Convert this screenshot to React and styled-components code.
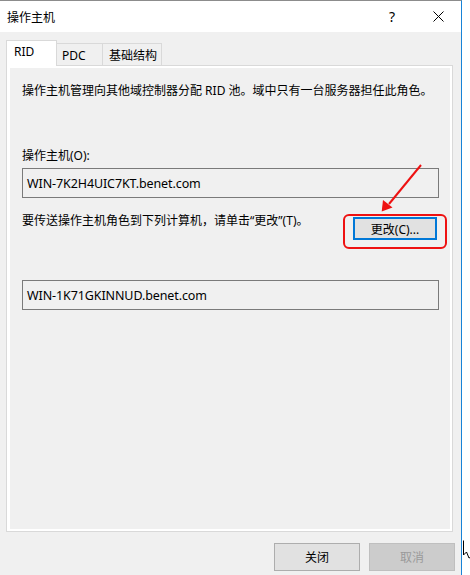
import React from "react";
import styled, { createGlobalStyle } from "styled-components";

const GlobalStyle = createGlobalStyle`
  html, body { margin: 0; padding: 0; background: #ffffff; }
  body {
    font-family: "Noto Sans", "Noto Sans CJK SC", sans-serif;
    font-size: 12px;
    color: #000;
  }
  * { box-sizing: border-box; }
`;

const Screen = styled.div`
  display: flex;
  width: 470px;
  height: 575px;
  overflow: hidden;
`;

const Window = styled.div`
  width: 462px;
  height: 575px;
  display: flex;
  flex-direction: column;
  background: #f0f0f0;
  border-top: 1px solid #8c8c8c;
  border-right: 1px solid #1883d7;
`;

const Strip = styled.div`
  flex: 1;
  position: relative;
  background: #ffffff;
`;

const Cursor = styled.svg`
  position: absolute;
  left: 1px;
  top: 540px;
`;

const TitleBar = styled.div`
  height: 31px;
  display: flex;
  align-items: center;
  background: #ffffff;
`;

const Title = styled.div`
  flex: 1;
  padding-left: 7px;
  font-family: "Noto Sans CJK SC", sans-serif;
  font-size: 12px;
  line-height: 16px;
  color: #000;
`;

const CaptionButton = styled.div`
  width: ${(p) => p.$w}px;
  height: 31px;
  display: flex;
  align-items: center;
  justify-content: center;
  font-family: "Noto Sans", sans-serif;
  font-size: 14px;
  color: #000;
`;

const Body = styled.div`
  flex: 1;
  display: flex;
  flex-direction: column;
  padding: 9px 6px 4px 6px;
`;

const TabStrip = styled.div`
  display: flex;
  align-items: flex-end;
  height: 25px;
  position: relative;
  z-index: 1;
  margin-bottom: -1px;
`;

const Tab = styled.div`
  height: ${(p) => (p.$active ? 26 : 23)}px;
  width: ${(p) => p.$w}px;
  padding-left: ${(p) => p.$pl}px;
  padding-top: ${(p) => (p.$active ? 3 : 4)}px;
  background: ${(p) => (p.$active ? "#ffffff" : "#f0f0f0")};
  border: 1px solid #d9d9d9;
  border-bottom: ${(p) => (p.$active ? "none" : "1px solid #d9d9d9")};
  margin-left: ${(p) => (p.$first ? 0 : -1)}px;
  font-size: 12px;
  line-height: 16px;
  white-space: nowrap;
`;

const Panel = styled.div`
  height: 467px;
  margin-right: 2px;
  border: 1px solid #d9d9d9;
  box-shadow: inset 3px 0 0 #fff, inset -2px 0 0 #fff, inset 0 2px 0 #fff, inset 0 -2px 0 #fff;
  padding: 17px 13px 0 15px;
  display: flex;
  flex-direction: column;
`;

const Text = styled.div`
  font-size: 12px;
  line-height: 16px;
  margin-top: ${(p) => p.$mt || 0}px;
  white-space: nowrap;
`;

const Field = styled.div`
  height: 30px;
  margin-top: ${(p) => p.$mt || 0}px;
  border: 1px solid #7a7a7a;
  background: #f0f0f0;
  padding-left: 4px;
  display: flex;
  align-items: center;
  font-size: 12.5px;
  letter-spacing: -0.1px;
`;

const ActionRow = styled.div`
  margin-top: 19px;
  display: flex;
  justify-content: space-between;
  align-items: flex-start;
  padding-right: 2px;
`;

const Highlight = styled.div`
  position: relative;
  &::before {
    content: "";
    position: absolute;
    left: -10px;
    right: -10px;
    top: -3px;
    bottom: -9px;
    border: 2px solid #ee1111;
    border-radius: 6px;
    pointer-events: none;
  }
`;

const Arrow = styled.svg`
  position: absolute;
  left: 20px;
  top: -56px;
  pointer-events: none;
`;

const Button = styled.button`
  width: ${(p) => p.$w}px;
  height: ${(p) => p.$h}px;
  margin: 0;
  padding: 0;
  font-family: "Noto Sans", "Noto Sans CJK SC", sans-serif;
  font-size: 12px;
  background: ${(p) => (p.$disabled ? "#cccccc" : "#e1e1e1")};
  color: ${(p) => (p.$disabled ? "#9a9a9a" : "#000")};
  border: ${(p) =>
    p.$focus ? "2px solid #0078d7" : p.$disabled ? "1px solid #bfbfbf" : "1px solid #adadad"};
  display: flex;
  align-items: center;
  justify-content: center;
`;

const Footer = styled.div`
  margin-top: 11px;
  display: flex;
  justify-content: flex-end;
  gap: 9px;
`;

export default function App() {
  return (
    <>
      <GlobalStyle />
      <Screen>
        <Window>
          <TitleBar>
            <Title>操作主机</Title>
            <CaptionButton $w={46}>?</CaptionButton>
            <CaptionButton $w={46}>
              <svg width="11" height="11" viewBox="0 0 11 11">
                <path d="M0.5 0.5 L10.5 10.5 M10.5 0.5 L0.5 10.5" stroke="#000" strokeWidth="1" fill="none" />
              </svg>
            </CaptionButton>
          </TitleBar>
          <Body>
            <TabStrip>
              <Tab $active $first $w={51} $pl={7}>RID</Tab>
              <Tab $w={47} $pl={5}>PDC</Tab>
              <Tab $w={60} $pl={6}>基础结构</Tab>
            </TabStrip>
            <Panel>
              <Text>操作主机管理向其他域控制器分配 RID 池。域中只有一台服务器担任此角色。</Text>
              <Text $mt={49}>操作主机(O):</Text>
              <Field $mt={4}>WIN-7K2H4UIC7KT.benet.com</Field>
              <ActionRow>
                <Text $mt={-4}>要传送操作主机角色到下列计算机，请单击“更改”(T)。</Text>
                <Highlight>
                  <Arrow width="52" height="54" viewBox="0 0 52 54">
                    <path d="M48 4 L16 43" stroke="#ee1111" strokeWidth="2" fill="none" />
                    <path d="M8.7 50.5 L10 39 L19.5 46.5 Z" fill="#ee1111" />
                  </Arrow>
                  <Button $w={84} $h={23} $focus>更改(C)...</Button>
                </Highlight>
              </ActionRow>
              <Field $mt={40}>WIN-1K71GKINNUD.benet.com</Field>
            </Panel>
            <Footer>
              <Button $w={86} $h={28}>关闭</Button>
              <Button $w={86} $h={28} $disabled>取消</Button>
            </Footer>
          </Body>
        </Window>
        <Strip>
          <Cursor width="8" height="20" viewBox="0 0 8 20">
            <path d="M0.5 0.5 L0.5 15 L3.5 12 L6 18 L7.5 17.3" stroke="#000" strokeWidth="1" fill="#fff" />
          </Cursor>
        </Strip>
      </Screen>
    </>
  );
}
